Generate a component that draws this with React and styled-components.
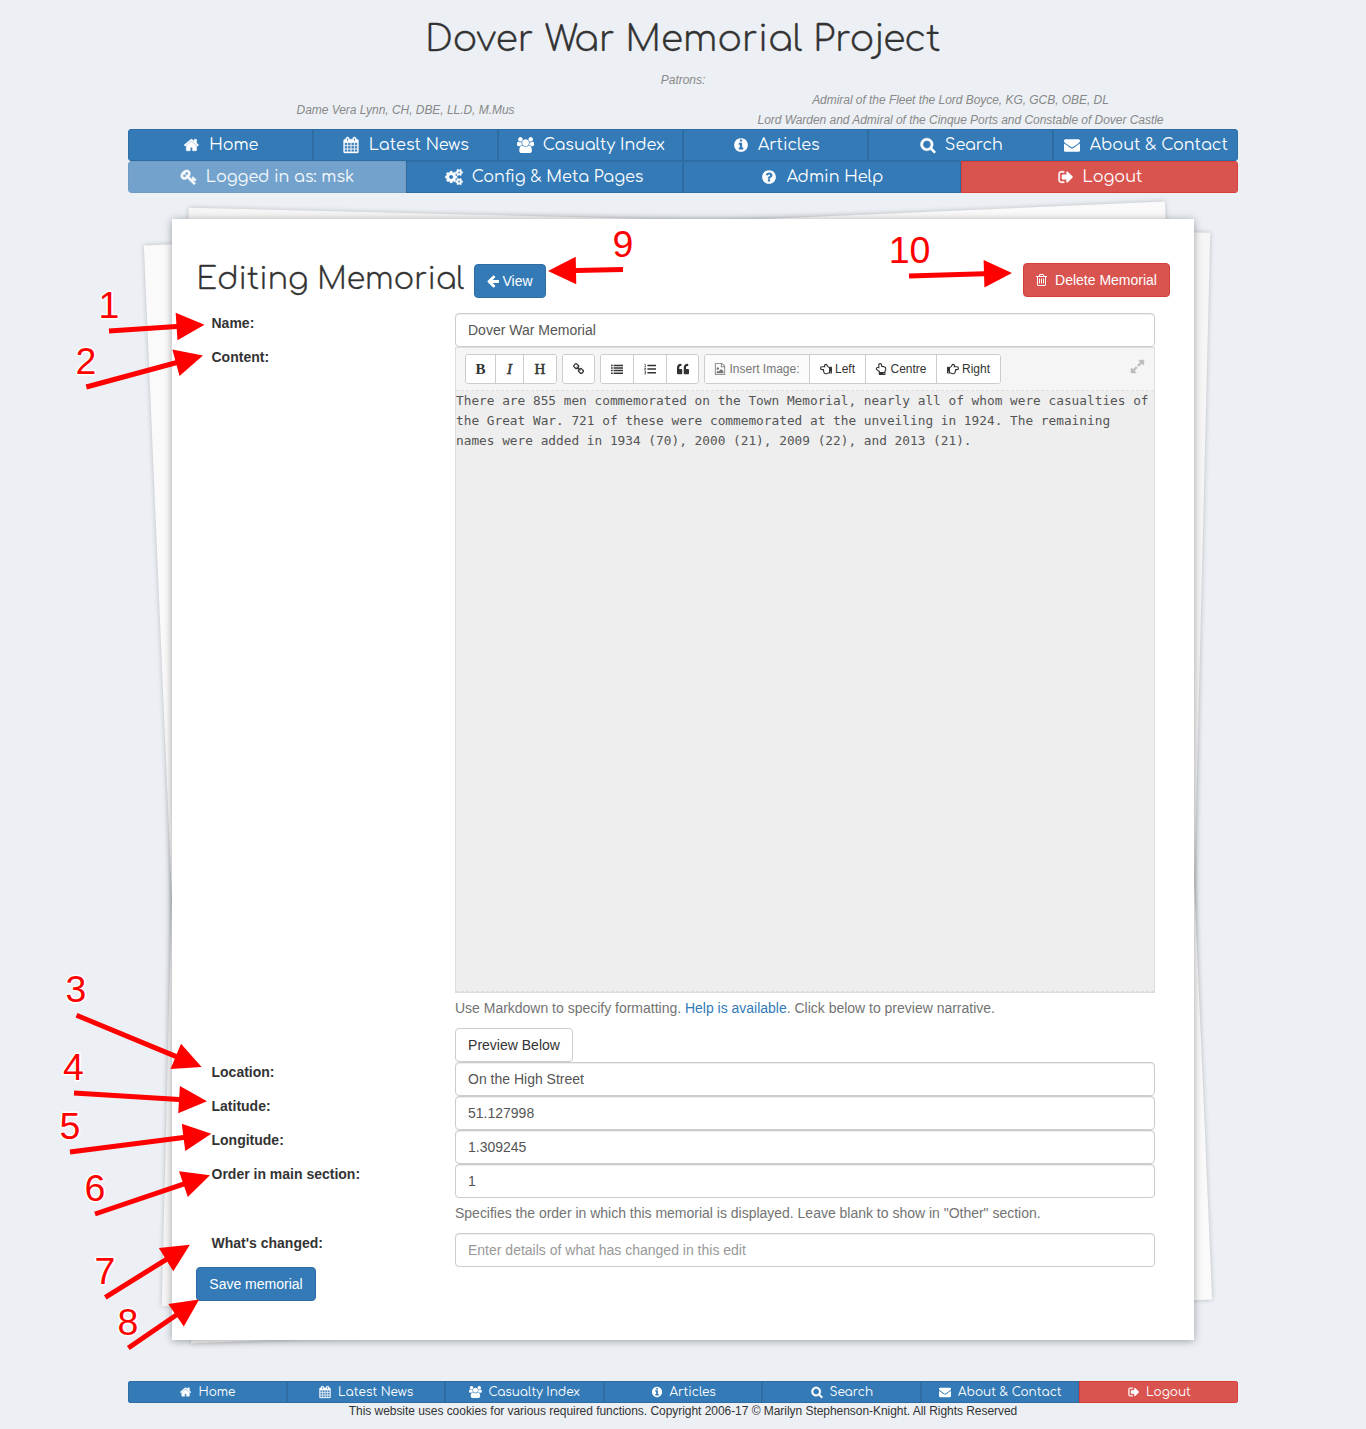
import React from "react";
import styled, { createGlobalStyle, css } from "styled-components";
import {
  FaQuoteLeft,
  FaRegHandPointLeft,
  FaRegHandPointUp,
  FaRegHandPointRight,
} from "react-icons/fa";

const sans = `"Liberation Sans", Arial, Helvetica, sans-serif`;
const rounded = `Comfortaa, Lato, "Open Sans", sans-serif`;

const GlobalStyle = createGlobalStyle`
  *, *::before, *::after { box-sizing: border-box; }
  body {
    margin: 0;
    background: #ecf0f5;
    color: #333;
    font: 14px/20px ${sans};
  }
`;

/* ---------- icons ---------- */

const glyphs = {
  home: [1664, "M1408 992v480q0 26-19 45t-45 19H960v-384H704v384H320q-26 0-45-19t-19-45V992q0-1 .5-3t.5-3l575-474 575 474q1 2 1 6zm223-69l-62 74q-8 9-21 11h-3q-13 0-21-7L832 424 140 1001q-12 8-24 7-13-2-21-11l-62-74q-8-10-7-23.5t11-21.5l719-599q32-26 76-26t76 26l244 204V288q0-14 9-23t23-9h192q14 0 23 9t9 23v408l219 182q10 8 11 21.5t-7 23.5z"],
  calendar: [1792, "M192 1664h288v-288h-288v288zm352 0h320v-288h-320v288zm-352-352h288v-320h-288v320zm352 0h320v-320h-320v320zm-352-384h288v-288h-288v288zm736 736h320v-288h-320v288zm-384-736h320v-288h-320v288zm768 736h288v-288h-288v288zm-384-352h320v-320h-320v320zm-352-864v-288q0-13-9.5-22.5t-22.5-9.5h-64q-13 0-22.5 9.5t-9.5 22.5v288q0 13 9.5 22.5t22.5 9.5h64q13 0 22.5-9.5t9.5-22.5zm736 864h288v-320h-288v320zm-384-384h320v-288h-320v288zm384 0h288v-288h-288v288zm32-480v-288q0-13-9.5-22.5t-22.5-9.5h-64q-13 0-22.5 9.5t-9.5 22.5v288q0 13 9.5 22.5t22.5 9.5h64q13 0 22.5-9.5t9.5-22.5zm384-64v1280q0 52-38 90t-90 38h-1408q-52 0-90-38t-38-90v-1280q0-52 38-90t90-38h128v-96q0-66 47-113t113-47h64q66 0 113 47t47 113v96h384v-96q0-66 47-113t113-47h64q66 0 113 47t47 113v96h128q52 0 90 38t38 90z"],
  users: [1920, "M593 896q-162 5-265 128h-134q-82 0-138-40.5t-56-118.5q0-353 124-353 6 0 43.5 21t97.5 42.5 119 21.5q67 0 133-23-5 37-5 66 0 139 81 256zm1071 637q0 120-73 189.5t-194 69.5h-874q-121 0-194-69.5t-73-189.5q0-53 3.5-103.5t14-109 26.5-108.5 43-97.5 62-81 85.5-53.5 111.5-20q10 0 43 21.5t73 48 107 48 135 21.5 135-21.5 107-48 73-48 43-21.5q61 0 111.5 20t85.5 53.5 62 81 43 97.5 26.5 108.5 14 109 3.5 103.5zm-1024-1277q0 106-75 181t-181 75-181-75-75-181 75-181 181-75 181 75 75 181zm704 384q0 159-112.5 271.5t-271.5 112.5-271.5-112.5-112.5-271.5 112.5-271.5 271.5-112.5 271.5 112.5 112.5 271.5zm576 225q0 78-56 118.5t-138 40.5h-134q-103-123-265-128 81-117 81-256 0-29-5-66 66 23 133 23 59 0 119-21.5t97.5-42.5 43.5-21q124 0 124 353zm-128-609q0 106-75 181t-181 75-181-75-75-181 75-181 181-75 181 75 75 181z"],
  info: [1792, "M1152 1376v-160q0-14-9-23t-23-9h-96v-512q0-14-9-23t-23-9h-320q-14 0-23 9t-9 23v160q0 14 9 23t23 9h96v320h-96q-14 0-23 9t-9 23v160q0 14 9 23t23 9h448q14 0 23-9t9-23zm-128-896v-160q0-14-9-23t-23-9h-192q-14 0-23 9t-9 23v160q0 14 9 23t23 9h192q14 0 23-9t9-23zm640 416q0 209-103 385.5t-279.5 279.5-385.5 103-385.5-103-279.5-279.5-103-385.5 103-385.5 279.5-279.5 385.5-103 385.5 103 279.5 279.5 103 385.5z"],
  search: [1728, "M1216 832q0-185-131.5-316.5t-316.5-131.5-316.5 131.5-131.5 316.5 131.5 316.5 316.5 131.5 316.5-131.5 131.5-316.5zm512 832q0 52-38 90t-90 38q-54 0-90-38l-343-342q-179 124-399 124-143 0-273.5-55.5t-225-150-150-225-55.5-273.5 55.5-273.5 150-225 225-150 273.5-55.5 273.5 55.5 225 150 150 225 55.5 273.5q0 220-124 399l343 343q37 37 37 90z"],
  envelope: [1792, "M1792 710v794q0 66-47 113t-113 47h-1472q-66 0-113-47t-47-113v-794q44 49 101 87 362 246 497 345 57 42 92.5 65.5t94.5 48 110 24.5h2q51 0 110-24.5t94.5-48 92.5-65.5q170-123 498-345 57-39 100-87zm0-294q0 79-49 151t-122 123q-376 261-468 325-10 7-42.5 31t-54 38.5-52 32.5-57.5 27-50 9h-2q-23 0-50-9t-57.5-27-52-32.5-54-38.5-42.5-31q-91-64-262-182.5t-205-142.5q-62-42-117-115.5t-55-136.5q0-78 41.5-130t118.5-52h1472q65 0 112.5 47t47.5 113z"],
  key: [1792, "M832 512q0-80-56-136t-136-56-136 56-56 136q0 42 19 83-41-19-83-19-80 0-136 56t-56 136 56 136 136 56 136-56 56-136q0-42-19-83 41 19 83 19 80 0 136-56t56-136zm851 704q0 17-49 66t-66 49q-9 0-28.5-16t-36.5-33-38.5-40-24.5-26l-96 96 220 220q28 28 28 68 0 42-39 81t-81 39q-40 0-68-28l-671-671q-176 131-365 131-163 0-265.5-102.5t-102.5-265.5q0-160 95-313t248-248 313-95q163 0 265.5 102.5t102.5 265.5q0 189-131 365l355 355 96-96q-3-3-26-24.5t-40-38.5-33-36.5-16-28.5q0-17 49-66t66-49q13 0 23 10 6 6 46 44.5t82 79.5 86.5 86 73 78 28.5 41z"],
  cogs: [1920, "M832 896q0-106-75-181t-181-75-181 75-75 181 75 181 181 75 181-75 75-181zm768 512q0-52-38-90t-90-38-90 38-38 90q0 53 37.5 90.5t90.5 37.5 90.5-37.5 37.5-90.5zm0-1024q0-52-38-90t-90-38-90 38-38 90q0 53 37.5 90.5t90.5 37.5 90.5-37.5 37.5-90.5zm-384 421v185q0 10-7 19.5t-16 10.5l-155 24q-11 35-32 76 34 48 90 115 7 11 7 20 0 12-7 19-23 30-82.5 89.5t-78.5 59.5q-11 0-21-7l-115-90q-37 19-77 31-11 108-23 155-7 24-30 24h-186q-11 0-20-7.5t-10-17.5l-23-153q-34-10-75-31l-118 89q-7 7-20 7-11 0-21-8-144-133-144-160 0-9 7-19 10-14 41-53t47-61q-23-44-35-82l-152-24q-10-1-17-9.5t-7-19.5v-185q0-10 7-19.5t16-10.5l155-24q11-35 32-76-34-48-90-115-7-11-7-20 0-12 7-20 22-30 82-89t79-59q11 0 21 7l115 90q34-18 77-32 11-108 23-154 7-24 30-24h186q11 0 20 7.5t10 17.5l23 153q34 10 75 31l118-89q8-7 20-7 11 0 21 8 144 133 144 160 0 8-7 19-12 16-42 54t-45 60q23 48 34 82l152 23q10 2 17 10.5t7 19.5zm640 533v140q0 16-149 31-12 27-30 52 51 113 51 138 0 4-4 7-122 71-124 71-8 0-46-47t-52-68q-20 2-30 2t-30-2q-14 21-52 68t-46 47q-2 0-124-71-4-3-4-7 0-25 51-138-18-25-30-52-149-15-149-31v-140q0-16 149-31 13-29 30-52-51-113-51-138 0-4 4-7 4-2 35-20t59-34 30-16q8 0 46 46.5t52 67.5q20-2 30-2t30 2q51-71 92-112l6-2q4 0 124 70 4 3 4 7 0 25-51 138 17 23 30 52 149 15 149 31zm0-1024v140q0 16-149 31-12 27-30 52 51 113 51 138 0 4-4 7-122 71-124 71-8 0-46-47t-52-68q-20 2-30 2t-30-2q-14 21-52 68t-46 47q-2 0-124-71-4-3-4-7 0-25 51-138-18-25-30-52-149-15-149-31v-140q0-16 149-31 13-29 30-52-51-113-51-138 0-4 4-7 4-2 35-20t59-34 30-16q8 0 46 46.5t52 67.5q20-2 30-2t30 2q51-71 92-112l6-2q4 0 124 70 4 3 4 7 0 25-51 138 17 23 30 52 149 15 149 31z"],
  question: [1792, "M1024 1376v-192q0-14-9-23t-23-9h-192q-14 0-23 9t-9 23v192q0 14 9 23t23 9h192q14 0 23-9t9-23zm256-672q0-88-55.5-163t-138.5-116-170-41q-243 0-371 213-15 24 8 42l132 100q7 6 19 6 16 0 25-12 53-68 86-92 34-24 86-24 48 0 85.5 26t37.5 59q0 38-20 61t-68 45q-63 28-115.5 86.5t-52.5 125.5v36q0 14 9 23t23 9h192q14 0 23-9t9-23q0-19 21.5-49.5t54.5-49.5q32-18 49-28.5t46-35 44.5-48 28-60.5 12.5-81zm384 192q0 209-103 385.5t-279.5 279.5-385.5 103-385.5-103-279.5-279.5-103-385.5 103-385.5 279.5-279.5 385.5-103 385.5 103 279.5 279.5 103 385.5z"],
  signOut: [1664, "M704 1440q0 4 1 20t.5 26.5-3 23.5-10 19.5-20.5 6.5h-320q-119 0-203.5-84.5t-84.5-203.5v-704q0-119 84.5-203.5t203.5-84.5h320q13 0 22.5 9.5t9.5 22.5q0 4 1 20t.5 26.5-3 23.5-10 19.5-20.5 6.5h-320q-66 0-113 47t-47 113v704q0 66 47 113t113 47h312l11.5 1 11.5 3 8 5.5 7 9 2 13.5zm928-544q0 26-19 45l-544 544q-19 19-45 19t-45-19-19-45v-288h-448q-26 0-45-19t-19-45v-384q0-26 19-45t45-19h448v-288q0-26 19-45t45-19 45 19l544 544q19 19 19 45z"],
  arrowLeft: [1536, "M1536 896v128q0 53-32.5 90.5t-84.5 37.5h-704l293 294q38 36 38 90t-38 90l-75 76q-37 37-90 37-52 0-91-37l-651-652q-37-37-37-90 0-52 37-91l651-650q38-38 91-38 52 0 90 38l75 74q38 38 38 91t-38 91l-293 293h704q52 0 84.5 37.5t32.5 90.5z"],
  trash: [1408, "M512 736v576q0 14-9 23t-23 9h-64q-14 0-23-9t-9-23v-576q0-14 9-23t23-9h64q14 0 23 9t9 23zm256 0v576q0 14-9 23t-23 9h-64q-14 0-23-9t-9-23v-576q0-14 9-23t23-9h64q14 0 23 9t9 23zm256 0v576q0 14-9 23t-23 9h-64q-14 0-23-9t-9-23v-576q0-14 9-23t23-9h64q14 0 23 9t9 23zm128 724v-948h-896v948q0 22 7 40.5t14.5 27 10.5 8.5h832q3 0 10.5-8.5t14.5-27 7-40.5zm-672-1076h448l-48-117q-7-9-17-11h-317q-10 2-17 11zm928 32v64q0 14-9 23t-23 9h-96v948q0 83-47 143.5t-113 60.5h-832q-66 0-113-58.5t-47-141.5v-952h-96q-14 0-23-9t-9-23v-64q0-14 9-23t23-9h309l70-167q15-37 54-63t79-26h320q40 0 79 26t54 63l70 167h309q14 0 23 9t9 23z"],
  link: [1664, "M1456 1216q0-40-28-68l-208-208q-28-28-68-28-42 0-72 32 3 3 19 18.5t21.5 21.5 15 19 13 25.5 3.5 27.5q0 40-28 68t-68 28q-15 0-27.5-3.5t-25.5-13-19-15-21.5-21.5-18.5-19q-33 31-33 73 0 40 28 68l206 207q27 27 68 27 40 0 68-26l147-146q28-28 28-67zm-703-705q0-40-28-68l-206-207q-28-28-68-28-39 0-68 27l-147 146q-28 28-28 67 0 40 28 68l208 208q27 27 68 27 42 0 72-31-3-3-19-18.5t-21.5-21.5-15-19-13-25.5-3.5-27.5q0-40 28-68t68-28q15 0 27.5 3.5t25.5 13 19 15 21.5 21.5 18.5 19q33-31 33-73zm895 705q0 120-85 203l-147 146q-83 83-203 83-121 0-204-85l-206-207q-83-83-83-203 0-123 88-209l-88-88q-86 88-208 88-120 0-204-84l-208-208q-84-84-84-204t85-203l147-146q83-83 203-83 121 0 204 85l206 207q83 83 83 203 0 123-88 209l88 88q86-88 208-88 120 0 204 84l208 208q84 84 84 204z"],
  image: [1792, "M1596 380q28 28 48 76t20 88v1152q0 40-28 68t-68 28h-1344q-40 0-68-28t-28-68v-1600q0-40 28-68t68-28h896q40 0 88 20t76 48zm-444-244v376h376q-10-29-22-41l-313-313q-12-12-41-22zm384 1528v-1024h-416q-40 0-68-28t-28-68v-416h-768v1536h1280zm-128-448v320h-1024v-192l192-192 128 128 384-384zm-832-192q-80 0-136-56t-56-136 56-136 136-56 136 56 56 136-56 136-136 56z"],
  listUl: [1792, "M0 256h256v224H0zM0 640h256v224H0zM0 1024h256v224H0zM0 1408h256v224H0zM384 256h1408v224H384zM384 640h1408v224H384zM384 1024h1408v224H384zM384 1408h1408v224H384z"],
  listOl: [1792, "M100 128h120v380h80v80H60v-80h80V260H60zM50 700h260v240H150v60h160v90H50V860h160v-70H50zM50 1230h260v450H50v-90h160v-90H90v-90h120v-90H50zM512 256h1280v224H512zM512 790h1280v224H512zM512 1330h1280v224H512z"],
  expand: [1536, "M755 1056q0 13-10 23l-332 332 144 144q19 19 19 45t-19 45-45 19H64q-26 0-45-19t-19-45v-448q0-26 19-45t45-19 45 19l144 144 332-332q10-10 23-10t23 10l114 114q10 10 10 23zm781-864v448q0 26-19 45t-45 19-45-19l-144-144-332 332q-10 10-23 10t-23-10L791 759q-10-10-10-23t10-23l332-332-144-144q-19-19-19-45t19-45 45-19h448q26 0 45 19t19 45z"],
};

const Svg = styled.svg`
  flex: none;
  display: block;
  overflow: visible;
  fill: currentColor;
  stroke: currentColor;
  stroke-width: ${(p) => p.$weight};
`;

function Glyph({ name, size, weight = 0 }) {
  const [w, d] = glyphs[name];
  return (
    <Svg
      viewBox={`0 0 ${w} 1792`}
      width={(w / 1792) * size}
      height={size}
      $weight={weight}
      aria-hidden="true"
    >
      <path d={d} />
    </Svg>
  );
}

/* ---------- page frame ---------- */

const Page = styled.div`
  position: relative;
  height: 1429px;
  overflow: hidden;
`;

const Container = styled.div`
  width: 1110px;
  margin: 0 auto;
`;

const SiteTitle = styled.h1`
  margin: 0;
  height: 70px;
  padding-top: 19px;
  font: 300 36px/40px ${rounded};
  letter-spacing: 0.14px;
  -webkit-text-stroke: 0.3px currentColor;
  text-align: center;
`;

const Patrons = styled.div`
  height: 59px;
  color: #888;
  font-size: 12px;
  font-style: italic;
  letter-spacing: -0.04px;
  text-align: center;
`;

const PatronRow = styled.div`
  display: grid;
  grid-template-columns: 1fr 1fr;
  align-items: center;
`;

const Nav = styled.nav`
  display: grid;
  grid-auto-flow: column;
  grid-auto-columns: minmax(0, 1fr);
  height: ${(p) => (p.$small ? 22 : 32)}px;
  border-radius: ${(p) => (p.$small ? 3 : 4)}px;
  overflow: hidden;
`;

const NavItem = styled.a`
  display: flex;
  align-items: center;
  justify-content: center;
  gap: ${(p) => (p.$small ? 5 : 7)}px;
  padding-right: 1px;
  border: 1px solid ${(p) => (p.$danger ? "#d43f3a" : "#2e6da4")};
  background: ${(p) => (p.$danger ? "#d9534f" : "#337ab7")};
  color: #fff;
  font: 400 ${(p) => (p.$small ? 12 : 16)}px/20px ${rounded};
  white-space: nowrap;
  opacity: ${(p) => (p.$dim ? 0.65 : 1)};
`;

const NavIcon = styled.span`
  display: flex;
  justify-content: center;
  width: 1.286em;
`;

/* ---------- stacked paper ---------- */

const Stack = styled.main`
  position: relative;
  width: 1022px;
  height: 1121px;
  margin: 26px auto 0;
`;

const Sheet = styled.div`
  position: absolute;
  left: ${(p) => p.$left}px;
  top: ${(p) => p.$top}px;
  width: 1022px;
  height: 1099px;
  background: ${(p) => p.$tone};
  box-shadow: 0 0 5px rgba(0, 0, 0, 0.22);
  transform: rotate(${(p) => p.$tilt}deg);
`;

const Paper = styled.div`
  position: relative;
  height: 100%;
  padding: 44px 24px 0;
  background: #fff;
  box-shadow: 0 1px 8px rgba(0, 0, 0, 0.35);
`;

const PaperHead = styled.header`
  display: flex;
  align-items: flex-start;
  height: 50px;
`;

const Heading = styled.h2`
  width: 278px;
  margin: 0;
  padding-left: 0.5px;
  font: 300 30px/33px ${rounded};
  letter-spacing: 0.08px;
  -webkit-text-stroke: 0.3px currentColor;
  white-space: nowrap;
`;

const tones = {
  primary: css`background: #337ab7; border-color: #2e6da4; color: #fff;`,
  danger: css`background: #d9534f; border-color: #d43f3a; color: #fff;`,
  plain: css`background: #fff; border-color: #ccc; color: #333;`,
};

const Button = styled.button`
  display: inline-flex;
  align-items: center;
  justify-content: center;
  gap: ${(p) => p.$gap || 0}px;
  width: ${(p) => p.$w}px;
  height: 34px;
  margin: ${(p) => p.$offset || 0}px 0 0 ${(p) => (p.$end ? "auto" : 0)};
  padding: 0;
  border: 1px solid;
  border-radius: 4px;
  font: 14px/20px ${sans};
  white-space: nowrap;
  ${(p) => tones[p.$tone]}
`;

/* ---------- form ---------- */

const Row = styled.div`
  display: grid;
  grid-template-columns: 243.5px 700px;
  padding-left: 15.5px;
`;

const Label = styled.label`
  font-weight: 700;
`;

const Input = styled.input`
  display: block;
  width: 100%;
  height: 34px;
  padding: 6px 12px;
  border: 1px solid #ccc;
  border-radius: 4px;
  background: #fff;
  box-shadow: inset 0 1px 1px rgba(0, 0, 0, 0.075);
  color: #555;
  font: 14px/20px ${sans};
  &::placeholder { color: #999; opacity: 1; }
`;

const Help = styled.p`
  margin: 5px 0 10px;
  color: #737373;
  letter-spacing: -0.01px;
  white-space: nowrap;
`;

const HelpLink = styled.a`
  color: #337ab7;
`;

const Editor = styled.div`
  height: 646px;
  border: 1px solid #ddd;
  background: #eee;
`;

const Toolbar = styled.div`
  display: flex;
  align-items: flex-start;
  gap: 5px;
  height: 43px;
  padding: 6px 10px 0 9px;
  border-bottom: 1px dashed #ddd;
  background: #f5f5f5;
`;

const Group = styled.div`
  display: flex;
  border: 1px solid #ccc;
  border-radius: 3px;
  overflow: hidden;
`;

const Tool = styled.button`
  display: flex;
  align-items: center;
  justify-content: center;
  gap: 3px;
  width: ${(p) => p.$w}px;
  height: 28px;
  padding: 0;
  border: 0;
  border-right: 1px solid #ccc;
  background: #fff;
  color: #333;
  font: 12px/18px ${sans};
  white-space: nowrap;
  &:last-child { border-right: 0; }
  ${(p) => p.$muted && css`color: #777; background: #fbfbfb;`}
`;

const Letter = styled.span`
  font: ${(p) => p.$face} 15px/18px "Liberation Serif", "Times New Roman", serif;
  -webkit-text-stroke: ${(p) => p.$ink || 0}px currentColor;
`;

const Fullscreen = styled.span`
  margin: 5px 0 0 auto;
  color: #bbb;
`;

const Source = styled.textarea`
  display: block;
  width: 100%;
  height: 601px;
  padding: 0;
  border: 0;
  border-bottom: 1px dashed #ddd;
  outline: 0;
  resize: none;
  overflow: hidden;
  background: #eee;
  color: #555;
  font: 12.79px/20px Consolas, "DejaVu Sans Mono", "Liberation Mono", monospace;
  white-space: pre;
`;

/* ---------- footer ---------- */

const Footer = styled.footer`
  margin-top: 20px;
  padding-top: 20px;
  border-top: 1px solid #eee;
`;

const Legal = styled.p`
  margin: 0;
  font-size: 12px;
  line-height: 17px;
  letter-spacing: -0.043px;
  text-align: center;
`;

/* ---------- callouts ---------- */

const Callouts = styled.svg`
  position: absolute;
  inset: 0;
  pointer-events: none;
`;

const Digit = styled.text`
  fill: #f00;
  stroke: #fff;
  stroke-width: 3px;
  stroke-linejoin: round;
  paint-order: stroke;
  font: 37.5px ${sans};
  text-anchor: middle;
`;

const callouts = [
  { n: 1, at: [109, 318.4], from: [109, 331], to: [203.5, 324.7] },
  { n: 2, at: [86, 374.4], from: [86.3, 387], to: [202, 355.7] },
  { n: 3, at: [76, 1002.4], from: [76.5, 1015.3], to: [200.7, 1066.7] },
  { n: 4, at: [73.5, 1080.4], from: [74, 1093], to: [206, 1101.3] },
  { n: 5, at: [70, 1139.4], from: [70, 1152], to: [210.3, 1134] },
  { n: 6, at: [95, 1201.4], from: [95, 1214], to: [209, 1175.5] },
  { n: 7, at: [105, 1284.4], from: [105.3, 1297.3], to: [189, 1245.3] },
  { n: 8, at: [128, 1335.4], from: [128.3, 1348], to: [198.3, 1300] },
  { n: 9, at: [623, 257.4], from: [623, 269.5], to: [549, 271] },
  { n: 10, at: [909.5, 263.4], from: [909, 276], to: [1011, 273] },
];

function Callout({ n, at, from, to }) {
  const dx = to[0] - from[0];
  const dy = to[1] - from[1];
  const len = Math.hypot(dx, dy);
  const angle = (Math.atan2(dy, dx) * 180) / Math.PI;
  return (
    <g>
      <Digit x={at[0]} y={at[1]}>{n}</Digit>
      <path
        transform={`translate(${from[0]} ${from[1]}) rotate(${angle})`}
        d={`M0 -2.5H${len - 27}V-13.7L${len + 1} 0L${len - 27} 13.7V2.5H0z`}
        fill="#f00"
      />
    </g>
  );
}

/* ---------- data ---------- */

const mainLinks = [
  { icon: "home", text: "Home" },
  { icon: "calendar", text: "Latest News" },
  { icon: "users", text: "Casualty Index" },
  { icon: "info", text: "Articles" },
  { icon: "search", text: "Search" },
  { icon: "envelope", text: "About & Contact" },
];

const logout = { icon: "signOut", text: "Logout", danger: true };

const adminLinks = [
  { icon: "key", text: "Logged in as: msk", dim: true },
  { icon: "cogs", text: "Config & Meta Pages" },
  { icon: "question", text: "Admin Help" },
  logout,
];

const heavy = { home: 60, calendar: 40, search: 60, key: 110, cogs: 70, signOut: 60 };

const narrative = `There are 855 men commemorated on the Town Memorial, nearly all of whom were casualties of
the Great War. 721 of these were commemorated at the unveiling in 1924. The remaining
names were added in 1934 (70), 2000 (21), 2009 (22), and 2013 (21).`;

function NavBar({ links, small }) {
  return (
    <Nav $small={small}>
      {links.map((l) => (
        <NavItem key={l.text} $small={small} $danger={l.danger} $dim={l.dim}>
          <NavIcon>
            <Glyph name={l.icon} size={small ? 12 : 16} weight={heavy[l.icon]} />
          </NavIcon>
          <span>{l.text}</span>
        </NavItem>
      ))}
    </Nav>
  );
}

function Field({ label, value, placeholder, help }) {
  return (
    <Row>
      <Label>{label}</Label>
      <div>
        <Input defaultValue={value} placeholder={placeholder} />
        {help && <Help>{help}</Help>}
      </div>
    </Row>
  );
}

export default function App() {
  return (
    <Page>
      <GlobalStyle />
      <Container>
        <SiteTitle>Dover War Memorial Project</SiteTitle>
        <Patrons>
          <div>Patrons:</div>
          <PatronRow>
            <div>Dame Vera Lynn, CH, DBE, LL.D, M.Mus</div>
            <div>
              Admiral of the Fleet the Lord Boyce, KG, GCB, OBE, DL
              <br />
              Lord Warden and Admiral of the Cinque Ports and Constable of Dover Castle
            </div>
          </PatronRow>
        </Patrons>
        <NavBar links={mainLinks} />
        <NavBar links={adminLinks} />

        <Stack>
          <Sheet $left={3} $top={1} $tone="#f6f6f6" $tilt={1.4} />
          <Sheet $left={-5.5} $top={4} $tone="#fafafa" $tilt={-2.46} />
          <Paper>
            <PaperHead>
              <Heading>Editing Memorial</Heading>
              <Button $tone="primary" $gap={3} $offset={1} $w={72}>
                <Glyph name="arrowLeft" size={14} />
                View
              </Button>
              <Button $tone="danger" $gap={8} $w={147} $end>
                <Glyph name="trash" size={14} />
                Delete Memorial
              </Button>
            </PaperHead>

            <Field label="Name:" value="Dover War Memorial" />
            <Row>
              <Label>Content:</Label>
              <div>
                <Editor>
                  <Toolbar>
                    <Group>
                      <Tool $w={30}><Letter $face="bold">B</Letter></Tool>
                      <Tool $w={28}><Letter $face="italic" $ink={0.5}>I</Letter></Tool>
                      <Tool $w={32}><Letter $face="normal" $ink={0.5}>H</Letter></Tool>
                    </Group>
                    <Group>
                      <Tool $w={31}><Glyph name="link" size={12} /></Tool>
                    </Group>
                    <Group>
                      <Tool $w={33}><Glyph name="listUl" size={12} /></Tool>
                      <Tool $w={33}><Glyph name="listOl" size={12} /></Tool>
                      <Tool $w={31}><FaQuoteLeft size={12} /></Tool>
                    </Group>
                    <Group>
                      <Tool $w={105} $muted><Glyph name="image" size={12} />Insert Image:</Tool>
                      <Tool $w={56}><FaRegHandPointLeft size={12} />Left</Tool>
                      <Tool $w={71}><FaRegHandPointUp size={12} />Centre</Tool>
                      <Tool $w={63}><FaRegHandPointRight size={12} />Right</Tool>
                    </Group>
                    <Fullscreen><Glyph name="expand" size={15} weight={60} /></Fullscreen>
                  </Toolbar>
                  <Source defaultValue={narrative} spellCheck={false} />
                </Editor>
                <Help>
                  Use Markdown to specify formatting. <HelpLink>Help is available</HelpLink>. Click below to
                  preview narrative.
                </Help>
                <Button $tone="plain" $w={118}>Preview Below</Button>
              </div>
            </Row>
            <Field label="Location:" value="On the High Street" />
            <Field label="Latitude:" value="51.127998" />
            <Field label="Longitude:" value="1.309245" />
            <Field
              label="Order in main section:"
              value="1"
              help={'Specifies the order in which this memorial is displayed. Leave blank to show in "Other" section.'}
            />
            <Field label="What's changed:" placeholder="Enter details of what has changed in this edit" />
            <Button $tone="primary" $w={120}>Save memorial</Button>
          </Paper>
        </Stack>

        <Footer>
          <NavBar links={[...mainLinks, logout]} small />
          <Legal>
            This website uses cookies for various required functions. Copyright 2006-17 © Marilyn
            Stephenson-Knight. All Rights Reserved
          </Legal>
        </Footer>
      </Container>

      <Callouts width="1366" height="1429">
        {callouts.map((c) => (
          <Callout key={c.n} {...c} />
        ))}
      </Callouts>
    </Page>
  );
}
